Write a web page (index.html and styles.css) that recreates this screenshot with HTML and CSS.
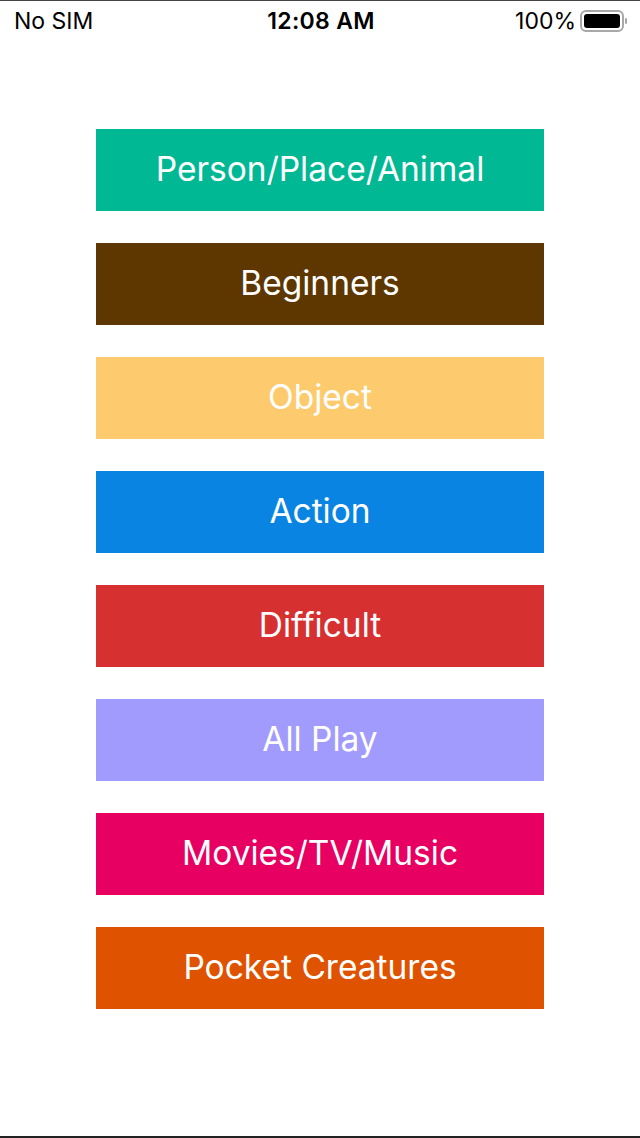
FILE: index.html
```html
<!DOCTYPE html>
<html>
	<head>
		<meta charset="utf-8" />
		<title>Categories</title>
		<link rel="stylesheet" href="styles.css">
	</head>
	<body>
		<div class="status">
			<span class="carrier">No SIM</span>
			<span class="time">12:08 AM</span>
			<span class="power">100%
				<svg class="battery" width="48" height="22" viewBox="0 0 48 22">
					<rect x="1" y="1" width="42" height="20" rx="5" fill="none" stroke="#a8a8a8" stroke-width="2"/>
					<rect x="4" y="4" width="36" height="14" rx="3" fill="#000"/>
					<rect x="45" y="8" width="2" height="6" rx="1" fill="#a8a8a8"/>
				</svg>
			</span>
		</div>
		<div class="menu">
			<a class="item teal" href="#">Person/Place/Animal</a>
			<a class="item brown" href="#">Beginners</a>
			<a class="item yellow" href="#">Object</a>
			<a class="item blue" href="#">Action</a>
			<a class="item red" href="#">Difficult</a>
			<a class="item purple" href="#">All Play</a>
			<a class="item pink" href="#">Movies/TV/Music</a>
			<a class="item orange" href="#">Pocket Creatures</a>
		</div>
	</body>
</html>
```
FILE: styles.css
```css
html, body
{
	margin: 0;
	height: 100%;
}
body
{
	box-sizing: border-box;
	background: #fff;
	border-top: 1px solid #444;
	border-bottom: 2px solid #222;
	font-family: Inter, "Liberation Sans", sans-serif;
	color: #000;
}
.status
{
	display: flex;
	justify-content: space-between;
	align-items: center;
	height: 40px;
	padding: 0 12px 0 14px;
	font-size: 23px;
}
.carrier, .power
{
	width: 170px;
}
.time
{
	font-weight: 600;
	letter-spacing: 0.3px;
}
.power
{
	display: flex;
	justify-content: flex-end;
	align-items: center;
	gap: 4px;
}
.battery
{
	display: block;
}
.menu
{
	display: flex;
	flex-direction: column;
	align-items: center;
	gap: 32px;
	padding-top: 88px;
}
.item
{
	display: flex;
	justify-content: center;
	align-items: center;
	box-sizing: border-box;
	width: 448px;
	height: 82px;
	padding-bottom: 3px;
	color: #fff;
	font-size: 33.5px;
	text-decoration: none;
}
.teal { background: #00b894; }
.brown { background: #5d3600; }
.yellow { background: #fdcb6e; }
.blue { background: #0984e3; }
.red { background: #d63031; }
.purple { background: #a29bfe; }
.pink { background: #e70062; }
.orange { background: #df5300; }
```
